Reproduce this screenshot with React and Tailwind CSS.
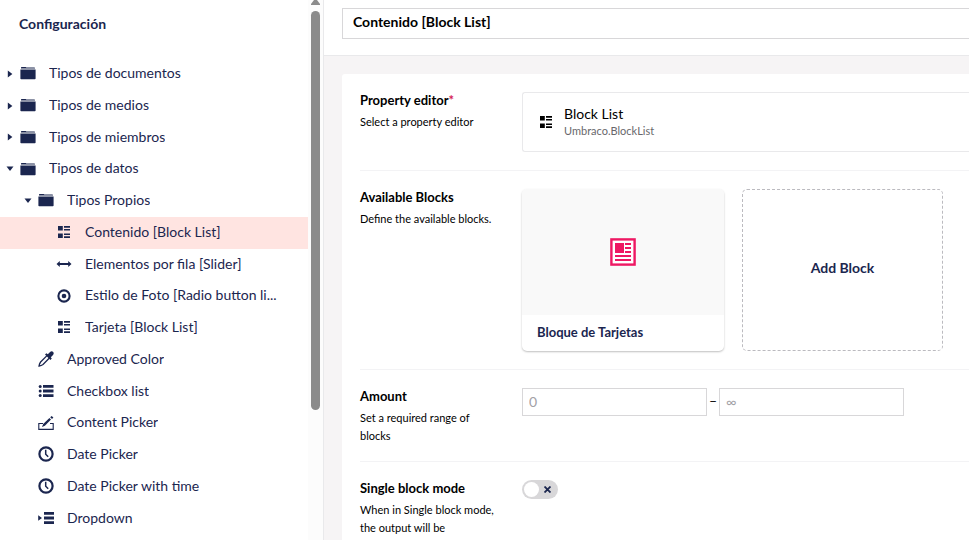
import React from 'react';

const FolderIcon = () => (
  <svg className="h-4 w-4" viewBox="0 0 16 16" fill="currentColor" aria-hidden="true">
    <path d="M1 3V2.6Q1 2 1.6 2H5.6Q6.2 2 6.3 2.6H14.4Q15 2.6 15 3.2V3.6H1Z" />
    <path d="M0.4 4.6H15.6V13.4Q15.6 14.2 14.8 14.2H1.2Q0.4 14.2 0.4 13.4Z" />
  </svg>
);

const BlockListIcon = () => (
  <svg className="h-4 w-4" viewBox="0 0 16 16" fill="currentColor" aria-hidden="true">
    <path d="M2 2h4.8v4.6H2zM2 9.4h4.8V14H2zM8 2h6v1.7H8zM8 4.9h6v1.7H8zM8 9.4h6v1.7H8zM8 12.3h6V14H8z" />
  </svg>
);

const SliderIcon = () => (
  <svg className="h-4 w-4" viewBox="0 0 16 16" fill="currentColor" aria-hidden="true">
    <path d="M0.5 8L3.8 5V7.1H12.2V5L15.5 8L12.2 11V8.9H3.8V11Z" />
  </svg>
);

const RadioIcon = () => (
  <svg className="h-4 w-4" viewBox="0 0 16 16" aria-hidden="true">
    <circle cx="8" cy="8" r="5.6" fill="none" stroke="currentColor" strokeWidth="2.1" />
    <circle cx="8" cy="8" r="2.3" fill="currentColor" />
  </svg>
);

const ColorIcon = () => (
  <svg className="h-4 w-4" viewBox="0 0 16 16" aria-hidden="true">
    <path d="M9 4.6L2.6 11Q1.4 12.6 1 15Q3.4 14.6 5 13.4L11.4 7" fill="none" stroke="currentColor" strokeWidth="1.3" />
    <path d="M7 3.6L8.4 2.2L9.8 3.2L11.8 1.2Q13.6 -0.4 15.2 0.9Q16.4 2.4 14.8 4.2L12.8 6.2L13.8 7.6L12.4 9Z" fill="currentColor" />
  </svg>
);

const ListIcon = () => (
  <svg className="h-4 w-4" viewBox="0 0 16 16" fill="currentColor" aria-hidden="true">
    <path d="M5 2h10.5v2.8H5zM5 6.6h10.5v2.8H5zM5 11.2h10.5V14H5z" />
    <circle cx="2.2" cy="3.4" r="1.5" />
    <circle cx="2.2" cy="8" r="1.5" />
    <circle cx="2.2" cy="12.6" r="1.5" />
  </svg>
);

const ContentIcon = () => (
  <svg className="h-4 w-4" viewBox="0 0 16 16" aria-hidden="true">
    <path d="M5 8.5H0.8V14.4H15.2V8.5H12" fill="none" stroke="currentColor" strokeWidth="1.1" />
    <path d="M4 12L5.2 9L11.4 3L13 4.6L6.9 10.8Z" fill="currentColor" />
    <path d="M12.2 2.2L13.6 1L15.4 2.6L14 4Z" fill="currentColor" />
  </svg>
);

const ClockIcon = () => (
  <svg className="h-4 w-4" viewBox="0 0 16 16" fill="none" stroke="currentColor" aria-hidden="true">
    <circle cx="8" cy="8" r="6.6" strokeWidth="2.2" />
    <path d="M7.7 3.8V8.2L10.2 10.8" strokeWidth="1.5" />
  </svg>
);

const DropdownIcon = () => (
  <svg className="h-4 w-4" viewBox="0 0 16 16" fill="currentColor" aria-hidden="true">
    <path d="M6 2h10v2.8H6zM6 6.6h10v2.8H6zM6 11.2h10V14H6zM0.2 5.2L4 8L0.2 10.8z" />
  </svg>
);

const NewspaperIcon = () => (
  <svg className="h-7 w-[26px] text-[#ee1863]" viewBox="0 0 26 28" aria-hidden="true">
    <rect x="1.4" y="1.4" width="23.2" height="25.2" fill="#fff" stroke="currentColor" strokeWidth="2.4" />
    <path
      d="M5 5h9v10H5zM15 5h6v2h-6zM15 9h6v2h-6zM15 13h6v2h-6zM5 17h16v2H5zM5 21h16v2H5z"
      fill="currentColor"
    />
  </svg>
);

const tree = [
  { label: 'Tipos de documentos', level: 0, icon: FolderIcon, state: 'closed' },
  { label: 'Tipos de medios', level: 0, icon: FolderIcon, state: 'closed' },
  { label: 'Tipos de miembros', level: 0, icon: FolderIcon, state: 'closed' },
  { label: 'Tipos de datos', level: 0, icon: FolderIcon, state: 'open' },
  { label: 'Tipos Propios', level: 1, icon: FolderIcon, state: 'open' },
  { label: 'Contenido [Block List]', level: 2, icon: BlockListIcon, active: true },
  { label: 'Elementos por fila [Slider]', level: 2, icon: SliderIcon },
  { label: 'Estilo de Foto [Radio button li...', level: 2, icon: RadioIcon },
  { label: 'Tarjeta [Block List]', level: 2, icon: BlockListIcon },
  { label: 'Approved Color', level: 1, icon: ColorIcon },
  { label: 'Checkbox list', level: 1, icon: ListIcon },
  { label: 'Content Picker', level: 1, icon: ContentIcon },
  { label: 'Date Picker', level: 1, icon: ClockIcon },
  { label: 'Date Picker with time', level: 1, icon: ClockIcon },
  { label: 'Dropdown', level: 1, icon: DropdownIcon },
];

const indent = ['pl-0', 'pl-[18px]', 'pl-9'];

const Caret = ({ state, label }) => (
  <button type="button" aria-label={label} aria-expanded={state === 'open'} className="flex w-5 shrink-0 justify-center">
    <svg className="h-2 w-2" viewBox="0 0 8 8" fill="currentColor" aria-hidden="true">
      {state === 'open' ? <path d="M0.5 1.5H7.5L4 6Z" /> : <path d="M1.8 0.5V7.5L6.4 4Z" />}
    </svg>
  </button>
);

const TreeItem = ({ item }) => {
  const Icon = item.icon;
  return (
    <li className={`flex items-center py-1 pr-5 ${indent[item.level]} ${item.active ? 'bg-[#ffe4e1]' : ''}`}>
      {item.state ? <Caret state={item.state} label={item.label} /> : <span className="w-5 shrink-0" />}
      <a href="#" className="flex min-w-0 items-center gap-[13px] pb-px text-[14px] leading-relaxed">
        <span className="shrink-0">
          <Icon />
        </span>
        <span className="truncate">{item.label}</span>
      </a>
    </li>
  );
};

const Sidebar = () => (
  <aside className="flex w-[324px] shrink-0 border-r border-[#e9e9eb] text-[#1b264f]">
    <nav className="min-w-0 flex-1">
      <h2 className="px-[19px] pt-[14px] pb-6 text-[14px] leading-5 font-bold">Configuración</h2>
      <ul>
        {tree.map((item) => (
          <TreeItem key={item.label} item={item} />
        ))}
      </ul>
    </nav>
    {/* Scrollbar track */}
    <div className="flex w-[15px] flex-col items-center gap-[6px] bg-[#fcfcfc]">
      <svg className="h-[5px] w-[9px] text-[#8b8b8b]" viewBox="0 0 9 5" fill="currentColor" aria-hidden="true">
        <path d="M3 0H6L9 4V5H0V4Z" />
      </svg>
      <div className="h-[399px] w-[9px] rounded-full bg-[#8b8b8b]" />
    </div>
  </aside>
);

const Property = ({ label, htmlFor, description, required, children }) => (
  <section className="flex border-b border-[#f3f3f5] py-[18px]">
    <div className="w-[162px] shrink-0 pr-5">
      <label htmlFor={htmlFor} className="block text-[13px] leading-4 font-bold">
        {label}
        {required && <span className="text-[#d42054]">*</span>}
      </label>
      <p className="mt-[5px] -mb-[2px] text-[11px] leading-[18px]">{description}</p>
    </div>
    <div className="min-w-0 flex-1">{children}</div>
  </section>
);

const inputStyle =
  'h-7 w-[185px] border border-[#d8d7d9] px-[6px] pb-[2px] text-[14px] text-black outline-none placeholder:text-[#a2a1a6]';

export default function App() {
  return (
    <div className="flex h-screen overflow-hidden bg-white font-['Lato',sans-serif] text-black">
      <Sidebar />
      <main className="flex min-w-0 flex-1 flex-col bg-[#f6f4f5]">
        <header className="border-b border-[#e9e9eb] bg-white pt-2 pb-4 pl-[18px]">
          <input
            type="text"
            aria-label="Name"
            defaultValue="Contenido [Block List]"
            className="block h-[31px] w-full border border-r-0 border-[#d8d7d9] px-[10px] pb-1 text-[14px] font-bold outline-none"
          />
        </header>
        <div className="pt-[18px] pl-[18px]">
          <div className="rounded-l-[3px] bg-white pl-[18px]">
            <Property label="Property editor" htmlFor="editor" description="Select a property editor" required>
              <button
                id="editor"
                type="button"
                className="flex h-[60px] w-full items-center gap-[10px] rounded-l-[3px] border border-r-0 border-[#e9e9eb] pb-px pl-[15px] text-left"
              >
                <BlockListIcon />
                <span>
                  <span className="block text-[14px] leading-[18px]">Block List</span>
                  <span className="block text-[11px] leading-4 text-[#68676b]">Umbraco.BlockList</span>
                </span>
              </button>
            </Property>

            <Property label="Available Blocks" htmlFor="add-block" description="Define the available blocks.">
              <div className="flex gap-[18px]">
                <a
                  href="#"
                  className="flex h-[162px] w-[202px] flex-col overflow-hidden rounded-[5px] bg-white shadow-[0_1px_2px_rgba(0,0,0,0.25)]"
                >
                  <span className="flex flex-1 items-center justify-center bg-[#f9f9f9]">
                    <NewspaperIcon />
                  </span>
                  <span className="px-[15px] pt-2 pb-[10px] text-[13px] leading-[18px] font-bold text-[#1b264f]">
                    Bloque de Tarjetas
                  </span>
                </a>
                <button
                  id="add-block"
                  type="button"
                  className="h-[162px] w-[201px] rounded-[5px] border border-dashed border-[#bbbabf] pb-[5px] text-[14px] font-bold text-[#1b264f]"
                >
                  Add Block
                </button>
              </div>
            </Property>

            <Property label="Amount" htmlFor="min" description="Set a required range of blocks">
              <div className="flex items-center">
                <input id="min" type="text" placeholder="0" className={inputStyle} />
                <span className="w-3 pb-[2px] text-center text-[14px] leading-5">–</span>
                <input type="text" aria-label="Maximum" placeholder="∞" className={inputStyle} />
              </div>
            </Property>

            <Property
              label="Single block mode"
              htmlFor="single"
              description="When in Single block mode, the output will be"
            >
              <label className="flex h-[19px] w-9 items-center justify-between rounded-full bg-[#d8d7d9] pr-[7px] pl-[2px]">
                <input id="single" type="checkbox" className="sr-only" />
                <span className="h-[15px] w-[15px] rounded-full bg-white" />
                <svg className="h-[7px] w-[7px]" viewBox="0 0 7 7" stroke="#1b264f" strokeWidth="1.8" aria-hidden="true">
                  <path d="M0.5 0.5L6.5 6.5M6.5 0.5L0.5 6.5" />
                </svg>
              </label>
            </Property>
          </div>
        </div>
      </main>
    </div>
  );
}
